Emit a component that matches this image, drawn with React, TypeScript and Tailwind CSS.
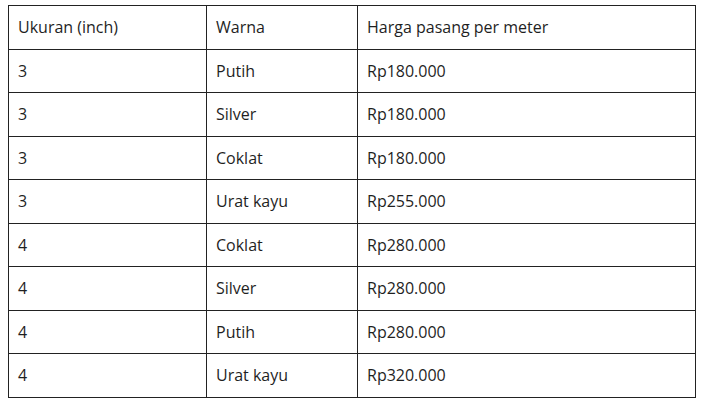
const rows: [string, string, string][] = [
  ['3', 'Putih', 'Rp180.000'],
  ['3', 'Silver', 'Rp180.000'],
  ['3', 'Coklat', 'Rp180.000'],
  ['3', 'Urat kayu', 'Rp255.000'],
  ['4', 'Coklat', 'Rp280.000'],
  ['4', 'Silver', 'Rp280.000'],
  ['4', 'Putih', 'Rp280.000'],
  ['4', 'Urat kayu', 'Rp320.000'],
];

const cell = 'border border-[#222] px-[9px] h-[43.5px] align-middle text-left font-normal';

export default function App() {
  return (
    <div className="bg-white w-[704px] h-[407px] pt-[5px] pl-[8px] text-[16px] leading-[22px] text-[#1f1f1f] font-['Open_Sans',sans-serif]">
      <table className="border-collapse table-fixed w-[687px]">
        <colgroup>
          <col className="w-[198px]" />
          <col className="w-[151px]" />
          <col className="w-[338px]" />
        </colgroup>
        <thead>
          <tr>
            <th className={cell}>Ukuran (inch)</th>
            <th className={cell}>Warna</th>
            <th className={cell}>Harga pasang per meter</th>
          </tr>
        </thead>
        <tbody>
          {rows.map((r, i) => (
            <tr key={i}>
              <td className={cell}>{r[0]}</td>
              <td className={cell}>{r[1]}</td>
              <td className={cell}>{r[2]}</td>
            </tr>
          ))}
        </tbody>
      </table>
    </div>
  );
}
